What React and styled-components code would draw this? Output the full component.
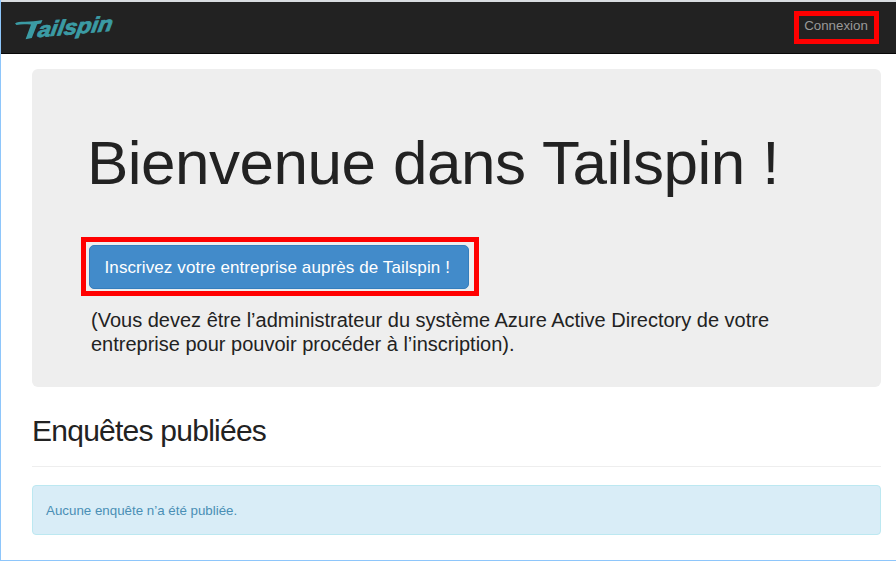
import React from "react";
import styled, { createGlobalStyle } from "styled-components";

const GlobalStyle = createGlobalStyle`
  * { box-sizing: border-box; }
  body {
    margin: 0;
    background: #fff;
    font-family: "Liberation Sans", Arial, sans-serif;
    color: #222;
  }
`;

const Page = styled.div`
  width: 896px;
  height: 561px;
  overflow: hidden;
  border-left: 1px solid #8ec6fb;
  border-bottom: 1px solid #8ec6fb;
`;

const Navbar = styled.header`
  height: 54px;
  display: flex;
  justify-content: space-between;
  align-items: flex-start;
  padding: 9px 17px 0 13px;
  background: #222;
  border-top: 2px solid #d9dde0;
  border-bottom: 1px solid #080808;
`;

const Brand = styled.a`
  display: block;
  height: 32px;
`;

const Highlight = styled.div`
  width: ${(p) => p.$width}px;
  height: ${(p) => p.$height}px;
  padding: ${(p) => p.$pad};
  border: 5px solid #f00;
`;

const SignIn = styled.a`
  display: block;
  margin-left: -1px;
  font-size: 13.33px;
  line-height: 18px;
  text-align: center;
  white-space: nowrap;
  color: #999;
`;

const Main = styled.main`
  padding: 15px 15px 0 31px;
`;

const Jumbotron = styled.section`
  height: 318px;
  padding: 57px 49px 0;
  border-radius: 6px;
  background: #eee;
`;

const Title = styled.h1`
  margin: 0 0 0 6px;
  font-size: 62px;
  line-height: 74px;
  font-weight: 400;
  letter-spacing: -0.52px;
  word-spacing: 1px;
  white-space: nowrap;
`;

const Action = styled.div`
  margin-top: 37px;
`;

const SignUp = styled.button`
  display: block;
  width: 380px;
  height: 44px;
  padding: 1px 0 0 14.5px;
  border: 1px solid #357ebd;
  border-radius: 5px;
  background: #428bca;
  color: #fff;
  font: 17px "Liberation Sans", Arial, sans-serif;
  letter-spacing: 0.1px;
  text-align: left;
  white-space: nowrap;
`;

const Note = styled.p`
  margin: 12px 0 0 10px;
  font-size: 20px;
  line-height: 24px;
  white-space: nowrap;
`;

const SectionTitle = styled.h2`
  height: 80px;
  margin: 0 0 18px;
  padding-top: 26px;
  border-bottom: 1px solid #eee;
  font-size: 30px;
  line-height: 36px;
  font-weight: 400;
  letter-spacing: -0.75px;
`;

const Alert = styled.div`
  height: 50px;
  padding: 15px 13px;
  border: 1px solid #bce8f1;
  border-radius: 4px;
  background: #d9edf7;
  color: #4a8fb5;
  font-size: 13.33px;
  line-height: 19px;
`;

function Logo() {
  return (
    <svg width="102" height="32" viewBox="14 11 102 32" role="img" aria-label="Tailspin">
      <g fill="#3b9ba4">
        <path d="M15 23.6 C17 21.8 20 22 25 21.8 C31 21.5 36 21 42.5 20 L41 23.4 L37.2 24.2 L31.8 38 L25.6 39.2 L31 24.6 C25 24 21 24 16.5 25 Z" />
        <text
          transform="translate(37 37.2) rotate(-5) skewX(-14)"
          fontFamily="Liberation Sans"
          fontSize="21"
          fontWeight="700"
          fontStyle="italic"
          textLength="75"
          lengthAdjust="spacingAndGlyphs"
          stroke="#3b9ba4"
          strokeWidth="0.8"
        >
          ailspin
        </text>
      </g>
    </svg>
  );
}

export default function App() {
  return (
    <>
      <GlobalStyle />
      <Page>
        <Navbar>
          <Brand>
            <Logo />
          </Brand>
          <Highlight $width={85} $height={33} $pad="1px 0 0">
            <SignIn>Connexion</SignIn>
          </Highlight>
        </Navbar>
        <Main>
          <Jumbotron>
            <Title>Bienvenue dans Tailspin !</Title>
            <Action>
              <Highlight $width={398} $height={59} $pad="3px">
                <SignUp>Inscrivez votre entreprise auprès de Tailspin !</SignUp>
              </Highlight>
            </Action>
            <Note>
              (Vous devez être l’administrateur du système Azure Active Directory de votre
              <br />
              entreprise pour pouvoir procéder à l’inscription).
            </Note>
          </Jumbotron>
          <SectionTitle>Enquêtes publiées</SectionTitle>
          <Alert>Aucune enquête n’a été publiée.</Alert>
        </Main>
      </Page>
    </>
  );
}
